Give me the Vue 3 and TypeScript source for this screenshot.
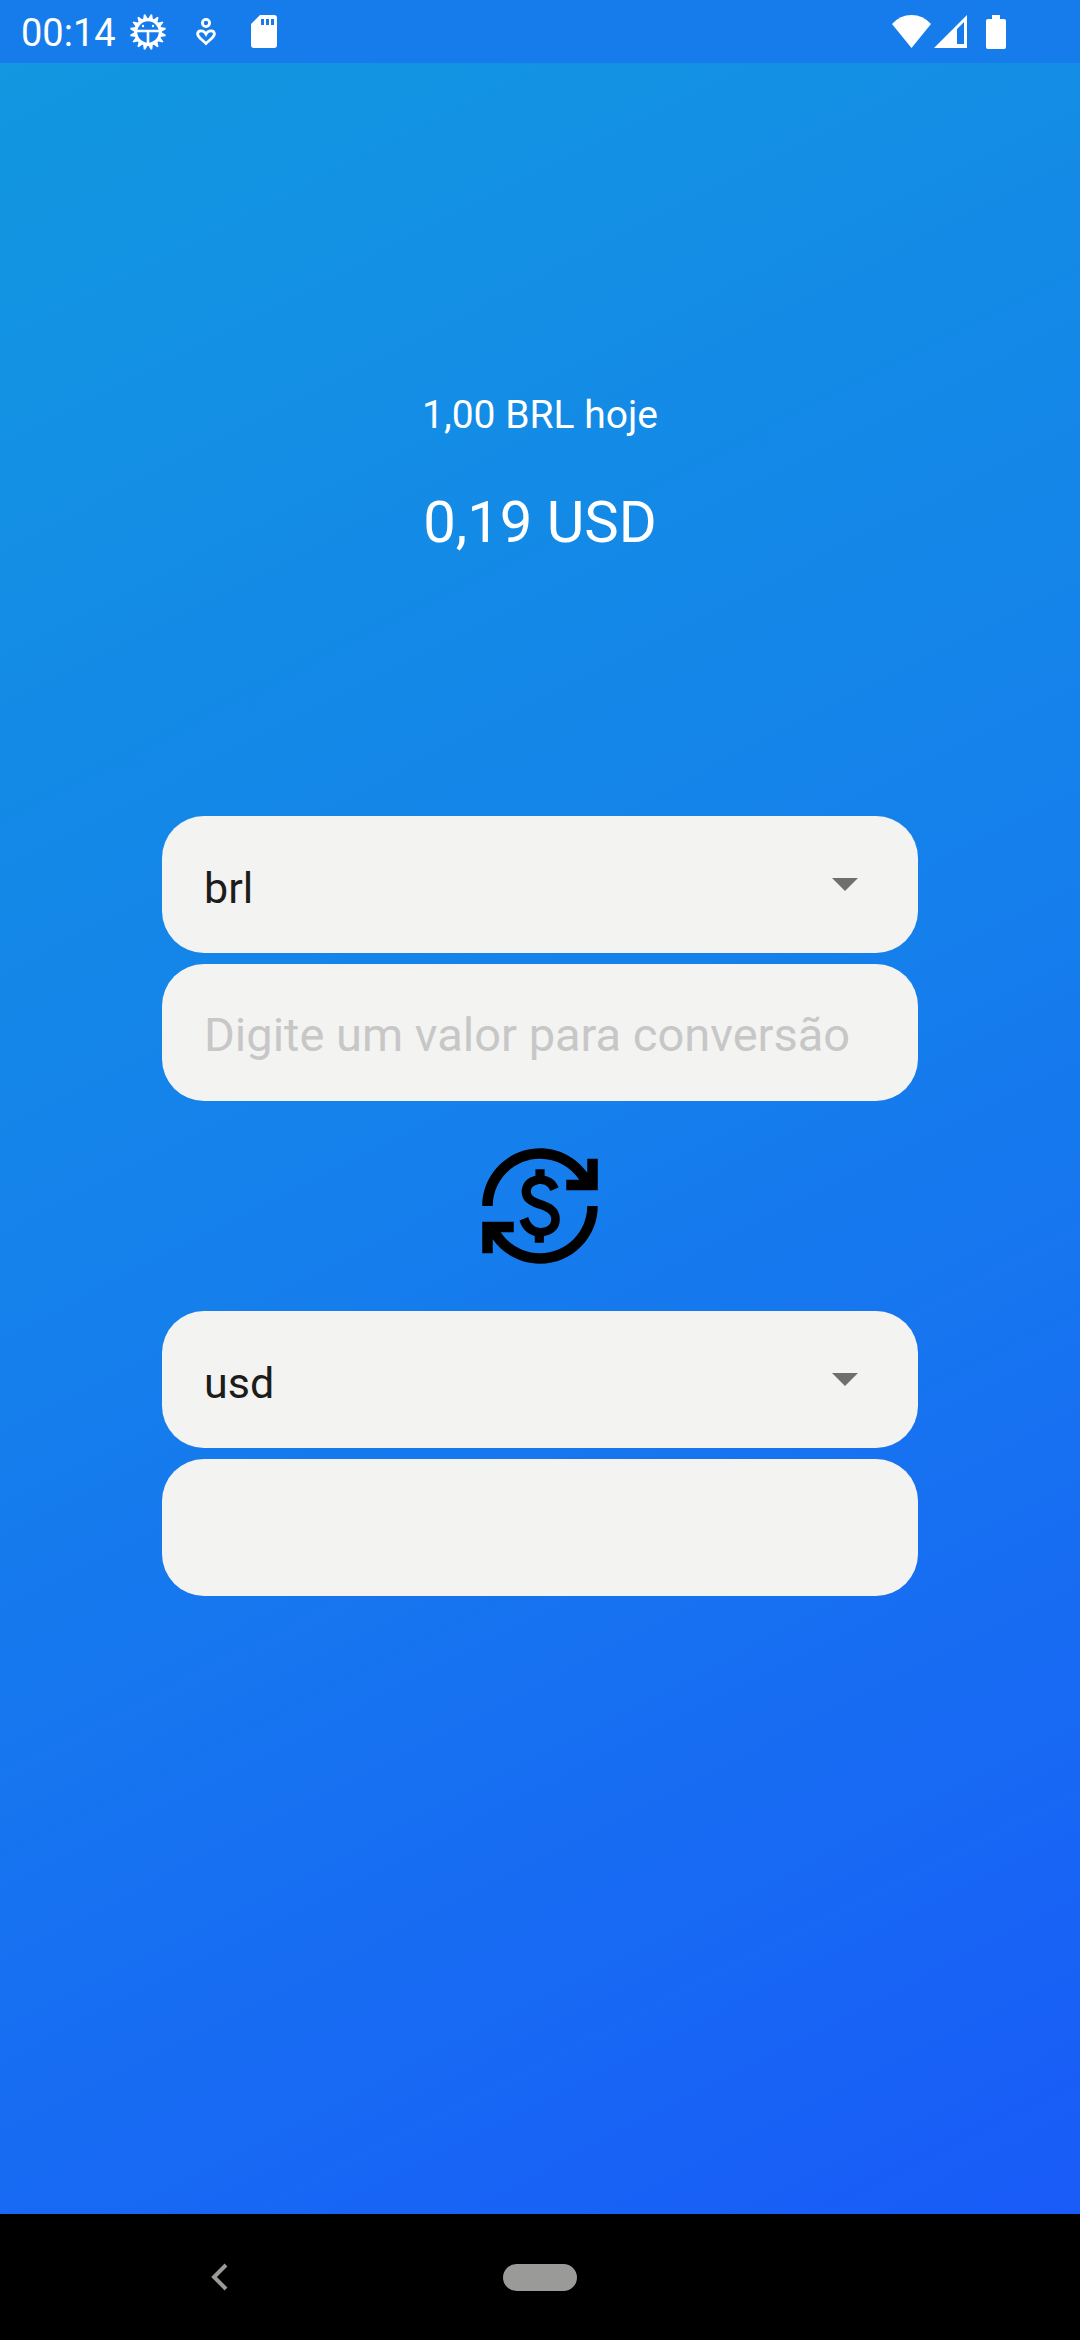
<script setup lang="ts">
import { ref } from 'vue'

const currencies: string[] = ['brl', 'usd', 'eur']
const from = ref<string>('brl')
const to = ref<string>('usd')
const amount = ref<string>('')
const result = ref<string>('')

// Teeth around the rim of the gear, in degrees
const teeth: number[] = Array.from({ length: 16 }, (_, i) => i * 22.5 + 11.25)

function swap(): void {
  const previous = from.value
  from.value = to.value
  to.value = previous
}
</script>

<template>
  <div class="screen">
    <header class="status">
      <div class="status-left">
        <time class="clock">00:14</time>
        <svg class="gear" viewBox="0 0 36 36" aria-hidden="true">
          <path
            v-for="angle in teeth"
            :key="angle"
            d="M15.5 5 L17.3 0 H18.7 L20.5 5Z"
            fill="#fff"
            :transform="`rotate(${angle} 18 18)`"
          />
          <circle cx="18" cy="18" r="12.3" fill="none" stroke="#fff" stroke-width="3.2" />
          <path d="M7 17 H29 M18 17 V30" fill="none" stroke="#fff" stroke-width="2.6" />
          <circle cx="13" cy="12" r="1.2" fill="#fff" />
          <circle cx="23" cy="12" r="1.2" fill="#fff" />
        </svg>
        <svg class="person" viewBox="0 0 20 28" aria-hidden="true">
          <g fill="none" stroke="#fff" stroke-width="2.8">
            <circle cx="10" cy="5" r="3.6" />
            <path d="M10 25.5 C6 21.5 1.6 19 1.6 16 C1.6 12 7.5 11.500 10 16 C12.500 11.500 18.400 12 18.400 16 C18.400 19 14 21.500 10 25.500Z" />
          </g>
        </svg>
        <svg class="card" viewBox="0 0 26 33" aria-hidden="true">
          <path
            fill="#fff"
            fill-rule="evenodd"
            d="M9 0 H23 Q26 0 26 3 V30 Q26 33 23 33 H3 Q0 33 0 30 V9Z M10 4 V10 H13 V4Z M15 4 V10 H18 V4Z M20 4 V10 H23 V4Z"
          />
        </svg>
      </div>
      <div class="status-right">
        <svg class="wifi" viewBox="0 0 39 33" aria-hidden="true">
          <path fill="#fff" d="M0 9 Q8 0 19.500 0 Q31 0 39 9 L19.500 33Z" />
        </svg>
        <svg class="signal" viewBox="0 0 33 33" aria-hidden="true">
          <path fill="#fff" fill-rule="evenodd" d="M33 0 V33 H0Z M30 7 L23 14 V29 H30Z" />
        </svg>
        <svg class="battery" viewBox="0 0 20 34" aria-hidden="true">
          <path
            fill="#fff"
            d="M6 0 H14 V4 H18 Q20 4 20 6 V32 Q20 34 18 34 H2 Q0 34 0 32 V6 Q0 4 2 4 H6Z"
          />
        </svg>
      </div>
    </header>

    <main class="content">
      <section class="quote">
        <p class="base">1,00 BRL hoje</p>
        <p class="rate">0,19 USD</p>
      </section>

      <form class="converter" @submit.prevent>
        <div class="group">
          <div class="picker">
            <select v-model="from" class="field select" aria-label="Moeda de origem">
              <option v-for="c in currencies" :key="c" :value="c">{{ c }}</option>
            </select>
            <svg class="arrow" viewBox="0 0 26 13" aria-hidden="true">
              <path fill="#6f6f6d" d="M0 0 H26 L13 13Z" />
            </svg>
          </div>
          <input
            v-model="amount"
            class="field input"
            type="text"
            inputmode="decimal"
            aria-label="Valor"
            placeholder="Digite um valor para conversão"
          />
        </div>

        <button class="swap" type="button" aria-label="Inverter moedas" @click="swap">
          <svg viewBox="0 0 24 24" aria-hidden="true">
            <path
              d="M12.890 11.100c-1.780-.590-2.640-.960-2.640-1.900 0-1.020 1.110-1.390 1.810-1.390 1.310 0 1.790.990 1.900 1.340l1.580-.670c-.150-.440-.820-1.910-2.660-2.230V5h-1.750v1.260c-2.600.560-2.620 2.850-2.620 2.960 0 2.270 2.250 2.910 3.350 3.310 1.580.560 2.280 1.070 2.280 2.030 0 1.130-1.050 1.610-1.980 1.610-1.820 0-2.340-1.870-2.400-2.090l-1.660.670c.630 2.190 2.280 2.780 2.900 2.960V19h1.750v-1.240c.520-.090 3.020-.590 3.020-3.220.010-1.390-.600-2.610-2.880-3.440zM3 21H1v-6h6v2H4.520c1.610 2.410 4.360 4 7.480 4 4.970 0 9-4.030 9-9h2c0 6.080-4.920 11-11 11-3.720 0-7.010-1.850-9-4.670V21zm-2-9C1 5.920 5.920 1 12 1c3.720 0 7.010 1.850 9 4.670V3h2v6h-6V7h2.480C17.870 4.590 15.120 3 12 3c-4.970 0-9 4.030-9 9H1z"
            />
          </svg>
        </button>

        <div class="group">
          <div class="picker">
            <select v-model="to" class="field select" aria-label="Moeda de destino">
              <option v-for="c in currencies" :key="c" :value="c">{{ c }}</option>
            </select>
            <svg class="arrow" viewBox="0 0 26 13" aria-hidden="true">
              <path fill="#6f6f6d" d="M0 0 H26 L13 13Z" />
            </svg>
          </div>
          <input v-model="result" class="field input" type="text" readonly aria-label="Resultado" />
        </div>
      </form>
    </main>

    <nav class="navbar">
      <button class="nav-button back" type="button" aria-label="Voltar">
        <svg viewBox="0 0 18 28" aria-hidden="true">
          <path d="M15 2 L3 14 L15 26" fill="none" stroke="#9a9a98" stroke-width="4" />
        </svg>
      </button>
      <button class="nav-button home" type="button" aria-label="Início"></button>
    </nav>
  </div>
</template>

<style>
body {
  margin: 0;
  background: #000;
}
</style>

<style scoped>
.screen {
  display: flex;
  flex-direction: column;
  min-height: 100vh;
  font-family: Roboto, 'Noto Sans', sans-serif;
  color: #fff;
}

svg {
  display: block;
}

.status {
  display: flex;
  justify-content: space-between;
  align-items: center;
  height: 63px;
  padding: 0 74px 0 21px;
  box-sizing: border-box;
  background: #167cec;
}

.status-left,
.status-right {
  display: flex;
  align-items: center;
}

.clock {
  font-size: 38px;
  line-height: 44px;
  padding-top: 2px;
}

.gear {
  width: 36px;
  height: 36px;
  margin-left: 14px;
}

.person {
  width: 20px;
  height: 28px;
  margin-left: 30px;
}

.card {
  width: 26px;
  height: 33px;
  margin-left: 35px;
}

.wifi {
  width: 39px;
  height: 33px;
}

.signal {
  width: 33px;
  height: 33px;
  margin-left: 3px;
}

.battery {
  width: 20px;
  height: 34px;
  margin-left: 19px;
}

.content {
  flex: 1;
  display: flex;
  flex-direction: column;
  align-items: center;
  padding: 329px 0 64px;
  background: linear-gradient(153deg, #1297e0 0%, #157fec 50%, #195bf8 100%);
}

.quote {
  display: flex;
  flex-direction: column;
  gap: 50px;
  text-align: center;
}

.base,
.rate {
  margin: 0;
}

.base {
  font-size: 39px;
  line-height: 46px;
}

.rate {
  font-size: 58px;
  line-height: 68px;
}

.converter {
  display: flex;
  flex-direction: column;
  align-items: center;
  gap: 42px;
  width: 70%;
  margin-top: 260px;
}

.group {
  display: flex;
  flex-direction: column;
  gap: 11px;
  width: 100%;
}

.picker {
  display: grid;
  align-items: center;
}

.picker > * {
  grid-area: 1 / 1;
}

.field {
  width: 100%;
  height: 137px;
  margin: 0;
  padding: 6px 42px 0;
  box-sizing: border-box;
  border: 0;
  border-radius: 42px;
  background: #f3f3f1;
  color: #1c1c1a;
  font-family: inherit;
  appearance: none;
  outline: 0;
}

.select {
  font-size: 43px;
}

.input {
  padding-top: 4px;
  font-size: 47px;
}

.input::placeholder {
  color: #c7c7c8;
  opacity: 1;
}

.arrow {
  width: 26px;
  height: 13px;
  justify-self: end;
  margin-right: 60px;
  pointer-events: none;
}

.swap {
  width: 126px;
  height: 126px;
  padding: 0;
  border: 0;
  background: none;
}

.navbar {
  display: grid;
  grid-template-columns: 1fr auto 1fr;
  align-items: center;
  height: 126px;
  background: #000;
}

.nav-button {
  padding: 0;
  border: 0;
  background: none;
}

.back {
  width: 18px;
  height: 28px;
  margin-left: 211px;
}

.home {
  width: 74px;
  height: 27px;
  border-radius: 14px;
  background: #9a9a98;
}
</style>
